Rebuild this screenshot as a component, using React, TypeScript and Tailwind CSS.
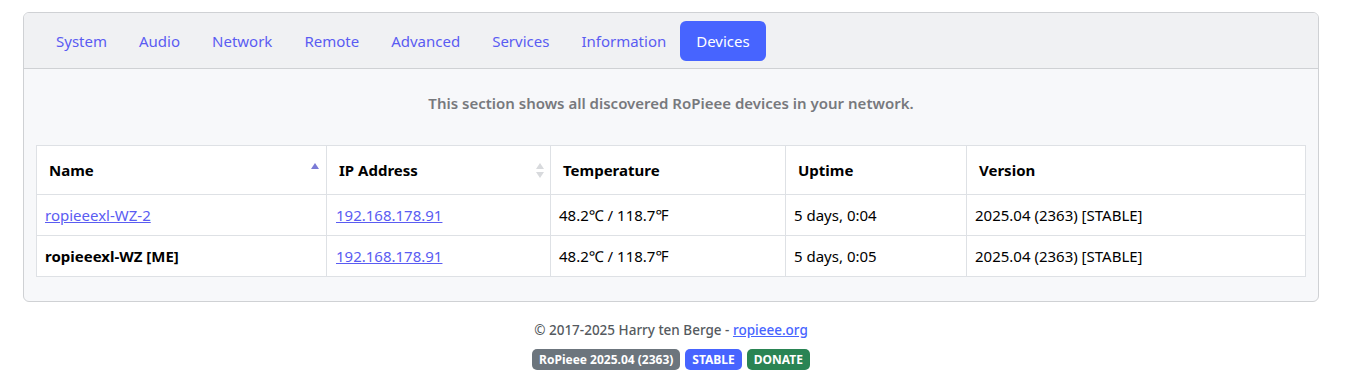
import React from "react";

const tabs = ["System", "Audio", "Network", "Remote", "Advanced", "Services", "Information", "Devices"];

const rows = [
  { name: "ropieeexl-WZ-2", me: false, ip: "192.168.178.91", temp: "48.2℃ / 118.7℉", up: "5 days, 0:04", ver: "2025.04 (2363) [STABLE]" },
  { name: "ropieeexl-WZ [ME]", me: true, ip: "192.168.178.91", temp: "48.2℃ / 118.7℉", up: "5 days, 0:05", ver: "2025.04 (2363) [STABLE]" },
];

export default function App() {
  return (
    <div className="w-[1351px] h-[385px] bg-white" style={{ fontFamily: '"Noto Sans", sans-serif' }}>
      <div className="pt-3 px-[23px]">
        <div className="border border-[#cfd1d4] rounded-[6px] overflow-hidden bg-[#f7f8fa] w-[1296px]">
          <div className="h-[56px] bg-[#f0f1f3] border-b border-[#cfd1d4] flex items-center pl-[16px] pt-[1px]">
            {tabs.map((t) => (
              <div
                key={t}
                className={
                  t === "Devices"
                    ? "h-[40px] px-[16px] ml-[-2px] flex items-center rounded-[6px] bg-[#4764ff] text-white text-[15px]"
                    : "h-[40px] px-[16px] flex items-center text-[#5a5cf2] text-[15px]"
                }
              >
                {t}
              </div>
            ))}
          </div>
          <div className="px-[12px] pt-[23px] pb-[24px]">
            <div className="text-center text-[15px] font-semibold text-[#77797d] h-[22px] leading-[22px]">
              This section shows all discovered RoPieee devices in your network.
            </div>
            <table className="mt-[31px] w-[1270px] border-collapse bg-white text-[15px] text-black">
              <colgroup>
                <col className="w-[290px]" />
                <col className="w-[224px]" />
                <col className="w-[235px]" />
                <col className="w-[181px]" />
                <col />
              </colgroup>
              <thead>
                <tr className="h-[49px]">
                  <th className="border border-[#dee1e5] text-left font-bold pl-[12px] relative">
                    Name
                    <svg className="absolute right-[7px] top-[17px]" width="8" height="6" viewBox="0 0 8 6">
                      <path d="M4 0 L8 6 L0 6 Z" fill="#7b7bd6" />
                    </svg>
                  </th>
                  <th className="border border-[#dee1e5] text-left font-bold pl-[12px] relative">
                    IP Address
                    <svg className="absolute right-[6px] top-[17px]" width="8" height="15" viewBox="0 0 8 15">
                      <path d="M4 0 L8 6 L0 6 Z" fill="#d8dadd" />
                      <path d="M4 15 L8 9 L0 9 Z" fill="#d8dadd" />
                    </svg>
                  </th>
                  <th className="border border-[#dee1e5] text-left font-bold pl-[12px]">Temperature</th>
                  <th className="border border-[#dee1e5] text-left font-bold pl-[12px]">Uptime</th>
                  <th className="border border-[#dee1e5] text-left font-bold pl-[12px]">Version</th>
                </tr>
              </thead>
              <tbody>
                {rows.map((r) => (
                  <tr key={r.name} className="h-[41px]">
                    <td className="border border-[#dee1e5] pl-[8px]">
                      {r.me ? (
                        <span className="font-bold">{r.name}</span>
                      ) : (
                        <span className="text-[#5a5cf2] underline">{r.name}</span>
                      )}
                    </td>
                    <td className="border border-[#dee1e5] pl-[9px]">
                      <span className="text-[#5a5cf2] underline">{r.ip}</span>
                    </td>
                    <td className="border border-[#dee1e5] pl-[8px]">{r.temp}</td>
                    <td className="border border-[#dee1e5] pl-[8px]">{r.up}</td>
                    <td className="border border-[#dee1e5] pl-[8px]">{r.ver}</td>
                  </tr>
                ))}
              </tbody>
            </table>
          </div>
        </div>
        <div className="w-[1296px] text-center mt-[18px] text-[13.5px] font-medium text-[#555a60] leading-[20px]">
          © 2017-2025 Harry ten Berge - <span className="text-[#4764ff] underline">ropieee.org</span>
        </div>
        <div className="w-[1296px] flex justify-center gap-[5px] mt-[9px]">
          <span className="h-[21px] px-[7px] rounded-[5px] bg-[#6c757d] text-white text-[12px] font-bold flex items-center">RoPieee 2025.04 (2363)</span>
          <span className="h-[21px] px-[7px] rounded-[5px] bg-[#4764ff] text-white text-[12px] font-bold flex items-center">STABLE</span>
          <span className="h-[21px] px-[7px] rounded-[5px] bg-[#2a8454] text-white text-[12px] font-bold flex items-center">DONATE</span>
        </div>
      </div>
    </div>
  );
}
